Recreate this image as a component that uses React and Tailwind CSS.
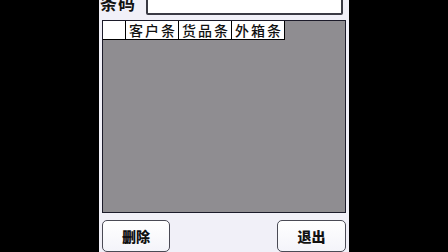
import React from 'react';

const headers = ["客户条", "货品条", "外箱条"];

const App = () => {
  return (
    <div className="w-[448px] h-[252px] bg-black flex justify-center overflow-hidden" style={{ fontFamily: '"Noto Sans CJK SC", sans-serif' }}>
      <div className="w-[250px] h-full bg-[#f1f0f8] flex flex-col">
        {/* barcode input row */}
        <div className="flex items-end h-[15px] pl-[1px] pr-[6px]">
          <span className="text-[17px] leading-none font-bold text-[#111] mb-[4px] tracking-[1px]">条码</span>
          <div className="ml-[10px] flex-1 h-[28px] bg-white border-2 border-[#3a3a44] rounded-[2px]"></div>
        </div>

        {/* grid */}
        <div className="mt-[5px] mx-[3px] h-[193px] bg-[#8f8d91] border border-[#1c1b2a]">
          <div className="flex h-[19px]">
            <div className="w-[23px] bg-white border-r border-b border-black"></div>
            {headers.map((h) => (
              <div key={h} className="w-[53px] pl-[2px] bg-white border-r border-b border-black flex items-center justify-center text-[14px] leading-none font-medium text-[#111] tracking-[2px]">
                {h}
              </div>
            ))}
          </div>
        </div>

        {/* buttons */}
        <div className="flex justify-between mt-[7px] mx-[3px]">
          <button className="w-[68px] h-[32px] rounded-[5px] border border-[#4a4a55] bg-gradient-to-b from-white to-[#f4f4fa] text-[14px] font-black text-[#111]">
            删除
          </button>
          <button className="w-[69px] h-[32px] rounded-[5px] border border-[#4a4a55] bg-gradient-to-b from-white to-[#f4f4fa] text-[14px] font-black text-[#111]">
            退出
          </button>
        </div>
      </div>
    </div>
  );
};

export default App;
